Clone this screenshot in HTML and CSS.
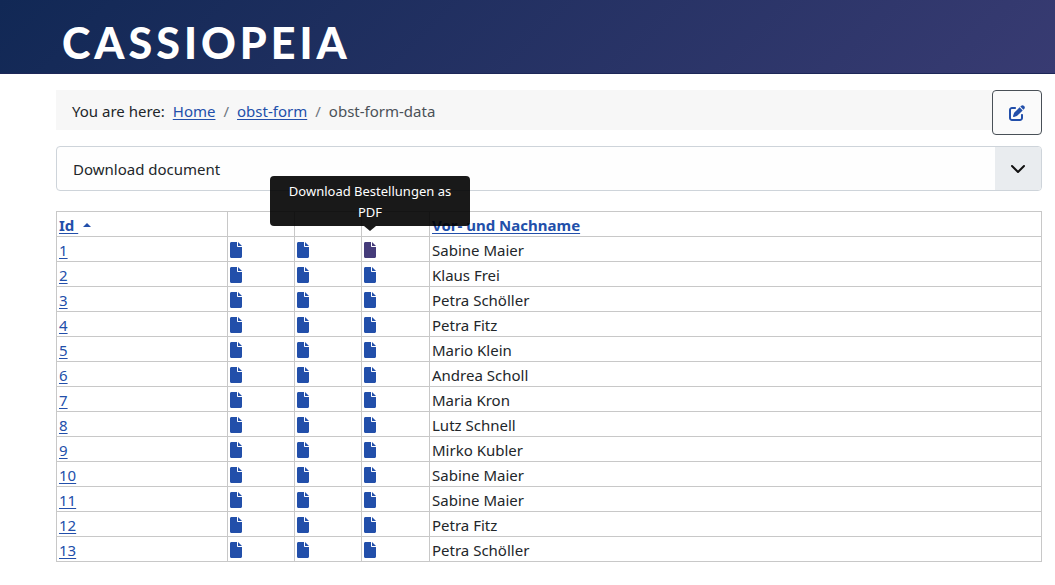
FILE: index.html
```html
<!DOCTYPE html>
<html lang="en">
<head>
<meta charset="utf-8">
<meta name="viewport" content="width=device-width, initial-scale=1">
<title>obst-form-data</title>
<link rel="stylesheet" href="styles.css">
</head>
<body>
<svg class="sprite" aria-hidden="true">
  <symbol id="file" viewBox="0 0 384 512"><path d="M0 48C0 20 20 0 48 0H224V128c0 17.700 14.300 32 32 32H384V464c0 28-20 48-48 48H48c-28 0-48-20-48-48V48zm384 80H256V0L384 128z"/></symbol>
</svg>
<header class="header"><a class="brand" href="#">CASSIOPEIA</a></header>
<main class="main">
  <div class="topline">
    <nav class="breadcrumbs" aria-label="Breadcrumbs">
      <span>You are here:</span>
      <ol class="crumbs">
        <li><a href="#">Home</a></li>
        <li><a href="#">obst-form</a></li>
        <li>obst-form-data</li>
      </ol>
    </nav>
    <button class="edit" type="button" aria-label="Edit">
      <svg viewBox="0 0 512 512" width="16" height="16"><path d="M471.600 21.700c-21.900-21.900-57.300-21.900-79.200 0L362.300 51.700l97.900 97.900 30.100-30.100c21.900-21.900 21.900-57.300 0-79.200L471.600 21.700zm-299.200 220c-6.100 6.100-10.800 13.600-13.500 21.900l-29.600 88.800c-2.900 8.600-.6 18.100 5.800 24.600s15.900 8.700 24.600 5.800l88.800-29.600c8.200-2.700 15.700-7.400 21.900-13.500L437.700 172.300 339.700 74.300 172.400 241.700zM96 64C43 64 0 107 0 160V416c0 53 43 96 96 96H352c53 0 96-43 96-96V320c0-17.700-14.300-32-32-32s-32 14.300-32 32v96c0 17.700-14.300 32-32 32H96c-17.700 0-32-14.300-32-32V160c0-17.700 14.300-32 32-32h96c17.700 0 32-14.300 32-32s-14.300-32-32-32H96z"/></svg>
    </button>
  </div>
  <div class="picker">
    <select class="picker-select" aria-label="Download document"><option>Download document</option></select>
    <span class="picker-arrow"><svg viewBox="0 0 16 16" width="16" height="16"><path d="M2 5l6 6 6-6"/></svg></span>
  </div>
  <table class="list">
    <colgroup><col class="col-id"><col class="col-file"><col class="col-file"><col class="col-file-last"><col></colgroup>
    <thead>
      <tr><th><a href="#">Id&nbsp;</a><span class="caret"></span></th><th></th><th></th><th></th><th><a href="#">Vor- und Nachname</a></th></tr>
    </thead>
    <tbody id="rows"></tbody>
  </table>
</main>
<script src="rows.js"></script>
</body>
</html>
```
FILE: styles.css
```css
* { box-sizing: border-box; }
body { margin: 0; background: #fff; color: #22262a; font: 15px/24px "Noto Sans", "Open Sans", sans-serif; }
a { color: #224faa; text-underline-offset: 2px; }
.sprite { display: none; }
.header { display: flex; padding: 18px 62px 5px; background: linear-gradient(135deg, #112855, #383b72); border-bottom: 1px solid #1d2758; }
.brand { color: #fff; font: 900 43px/50px Lato, sans-serif; letter-spacing: 4px; text-decoration: none; }
.main { padding: 16px 13px 24px 56px; }
.topline { display: flex; align-items: flex-start; margin-bottom: 11px; }
.breadcrumbs { display: flex; flex: 1; gap: 8px; padding: 9px 16px 7px; background: #f7f7f7; }
.crumbs { display: flex; margin: 0; padding: 0; list-style: none; color: #4b5157; }
.crumbs li + li::before { content: "/"; padding: 0 8px; color: #6d757e; }
.edit { display: flex; align-items: center; justify-content: center; width: 50px; height: 45px; padding: 0; border: 1px solid #495057; border-radius: 4px; background: #fafafa; }
.edit svg { fill: #224faa; }
.picker { position: relative; margin-bottom: 20px; }
.picker-select { display: block; width: 100%; height: 45px; padding: 0 60px 0 16px; border: 1px solid #ced4da; border-radius: 4px; background: #fefefe; color: inherit; font: inherit; appearance: none; }
.picker-arrow { position: absolute; inset: 1px 1px 1px auto; display: flex; align-items: center; justify-content: center; width: 46px; border-radius: 0 3px 3px 0; background: #e9ecef; pointer-events: none; }
.picker-arrow path { fill: none; stroke: #111; stroke-width: 2; stroke-linecap: round; stroke-linejoin: round; }
.list { width: 100%; border-collapse: collapse; table-layout: fixed; }
.col-id { width: 171px; }
.col-file { width: 67px; }
.col-file-last { width: 68px; }
.list th, .list td { height: 25px; padding: 2px 2px 0; border: 1px solid #c8c8c8; line-height: 22px; text-align: left; }
.caret { display: inline-block; margin-left: 5px; border: 4px solid transparent; border-top: 0; border-bottom-color: #224faa; vertical-align: 4px; }
.file { position: relative; display: block; width: 12px; height: 16px; }
.file svg { display: block; fill: #224faa; }
.file.active svg { fill: #453c7a; }
.tip { position: absolute; bottom: calc(100% + 16px); left: 50%; width: 200px; padding: 5px 8px 3px; border-radius: 4px; background: rgba(0, 0, 0, .9); color: #fff; font-size: 13px; line-height: 21px; text-align: center; transform: translateX(-50%); }
.tip::after { content: ""; position: absolute; top: 100%; left: 50%; margin-left: -6px; border: 6px solid transparent; border-top: 5px solid rgba(0, 0, 0, .9); border-bottom: 0; }
```
FILE: rows.js
```js
const names = ["Sabine Maier", "Klaus Frei", "Petra Schöller", "Petra Fitz", "Mario Klein", "Andrea Scholl", "Maria Kron", "Lutz Schnell", "Mirko Kubler", "Sabine Maier", "Sabine Maier", "Petra Fitz", "Petra Schöller"];
const icon = '<svg width="12" height="16"><use href="#file"/></svg>';
const tip = '<span class="tip" role="tooltip">Download Bestellungen as PDF</span>';
document.getElementById("rows").innerHTML = names.map((name, i) => {
  const files = [0, 1, 2].map(c => {
    const active = i === 0 && c === 2;
    return `<td><a class="file${active ? " active" : ""}" href="#" aria-label="Download">${icon}${active ? tip : ""}</a></td>`;
  }).join("");
  return `<tr><td><a href="#">${i + 1}</a></td>${files}<td>${name}</td></tr>`;
}).join("");
```
